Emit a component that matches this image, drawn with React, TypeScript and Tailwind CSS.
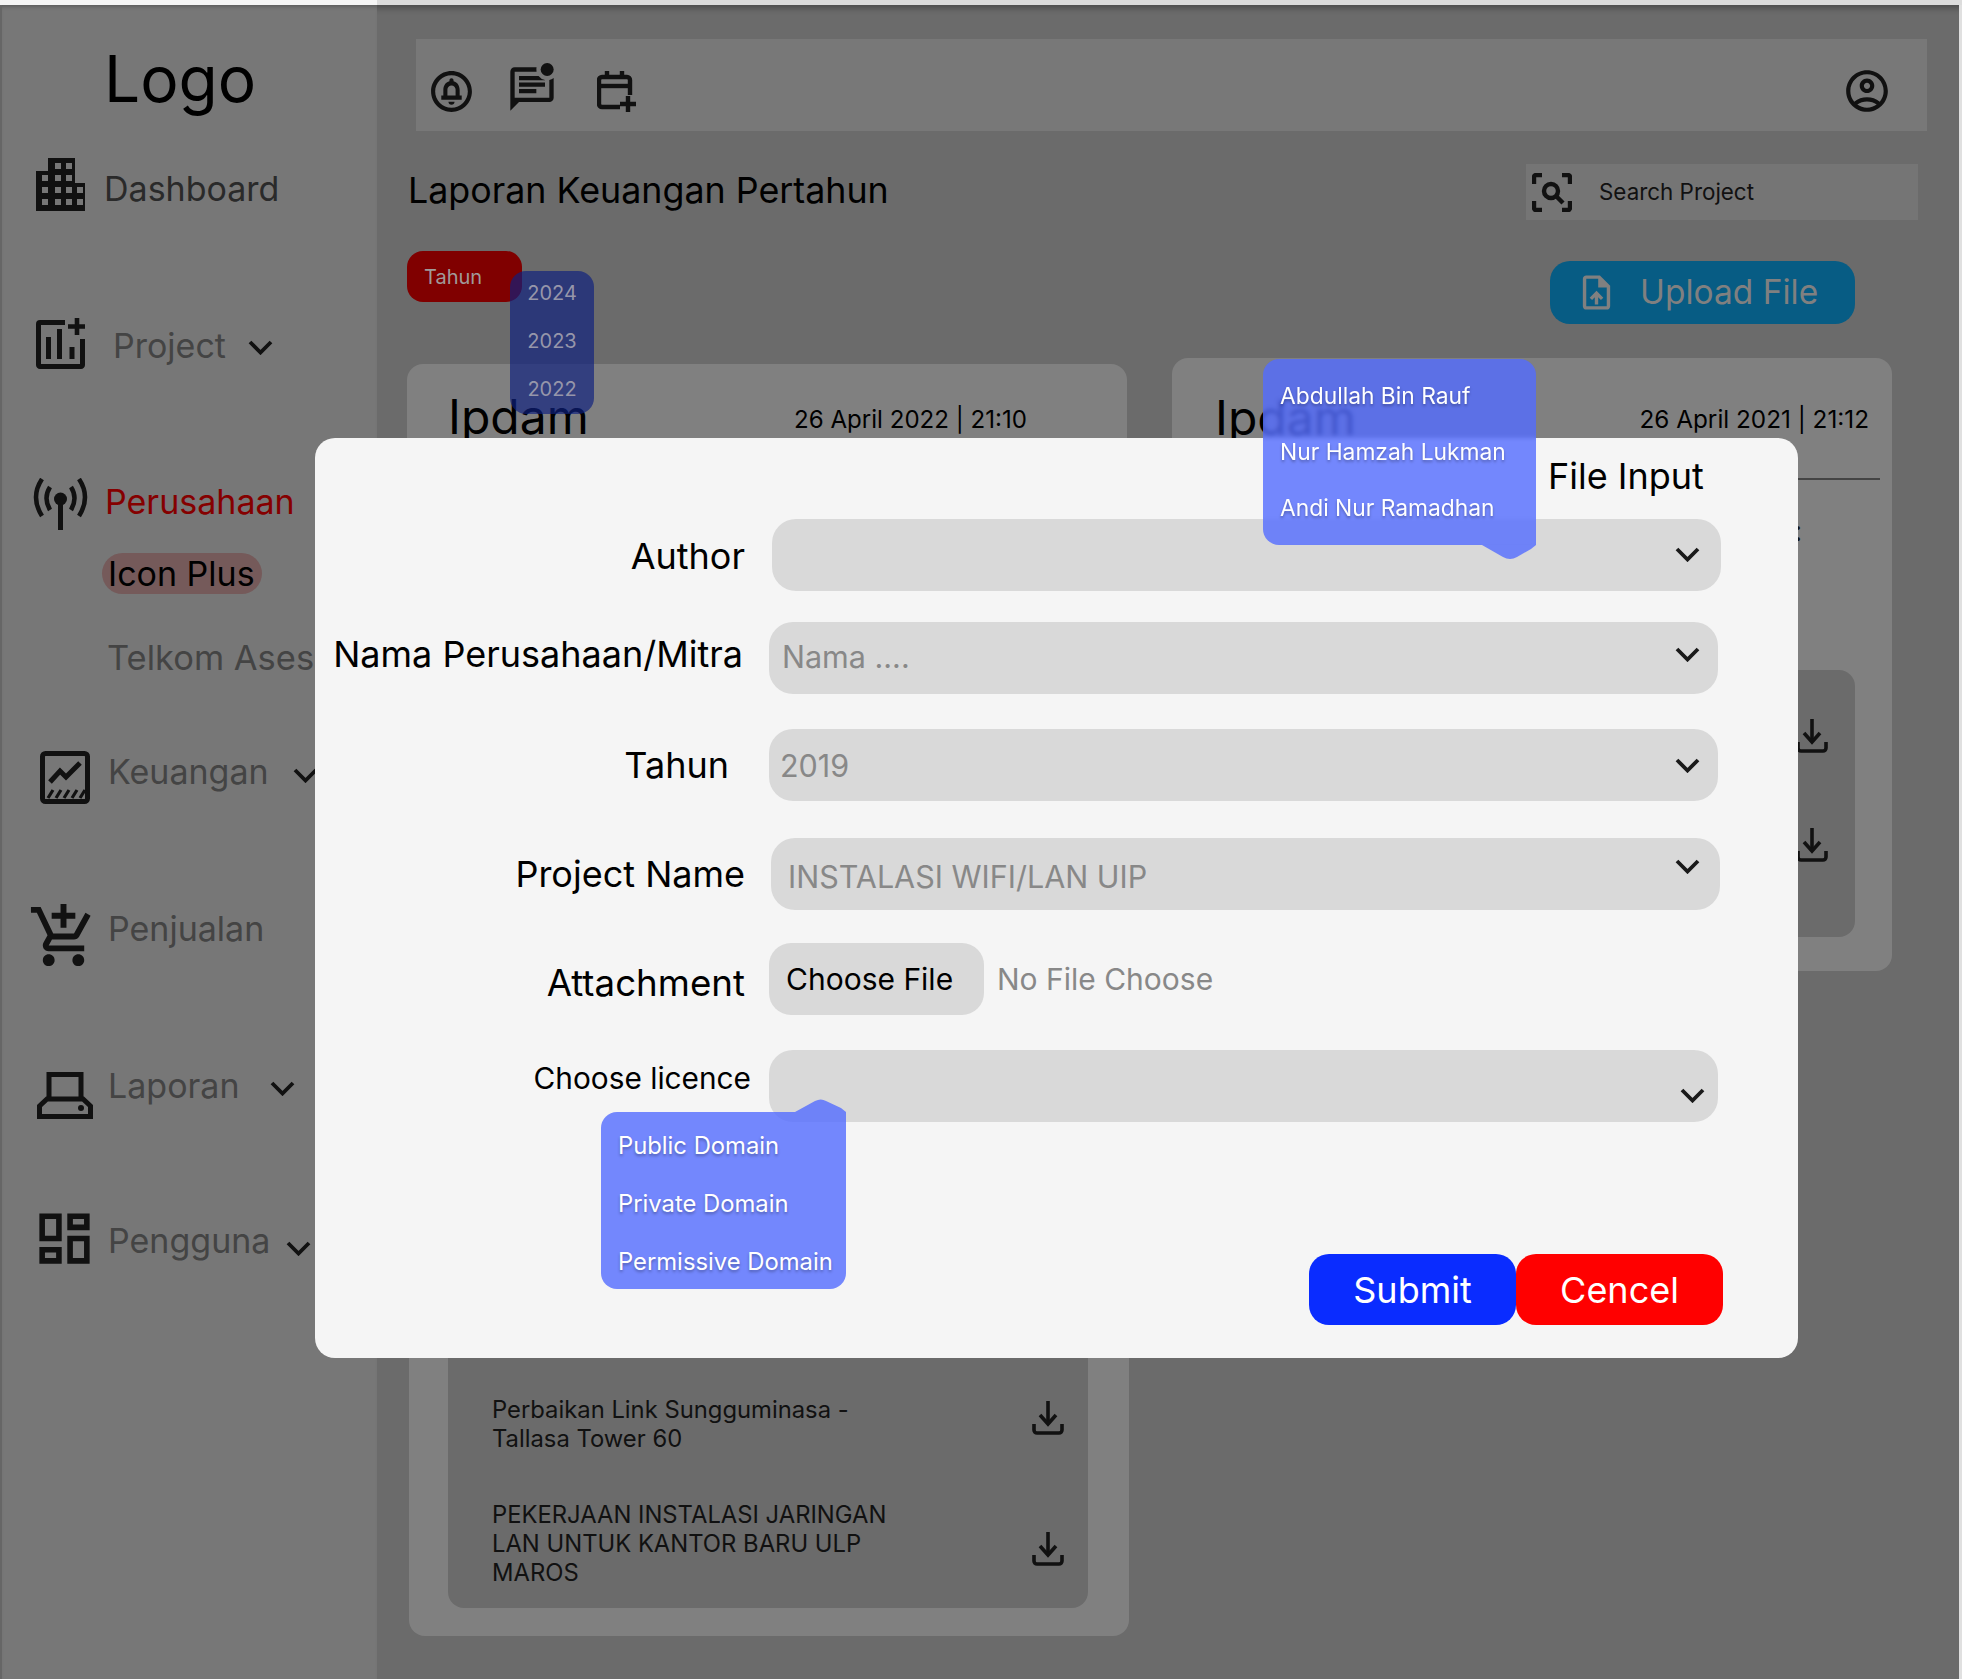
import React from "react";
import {
  MdOutlineAddShoppingCart,
  MdOutlineDashboard,
  MdOutlineCircleNotifications,
  MdOutlineMarkUnreadChatAlt,
  MdOutlineAccountCircle,
  MdOutlineUploadFile,
} from "react-icons/md";

const Chevron = ({ className = "" }: { className?: string }) => (
  <svg viewBox="0 0 25 15" className={`h-[15px] w-[25px] shrink-0 ${className}`} fill="none">
    <path d="M2 2 L12.5 12.5 L23 2" stroke="currentColor" strokeWidth="3.8" />
  </svg>
);

const Download = ({ className = "" }: { className?: string }) => (
  <svg viewBox="0 0 32 34" className={`h-[34px] w-[32px] shrink-0 text-[#111] ${className}`} fill="none" stroke="currentColor" strokeWidth="3.6">
    <path d="M16 0V21" />
    <path d="M8 14 L16 23 L24 14" />
    <path d="M2 23V29a3 3 0 0 0 3 3H27a3 3 0 0 0 3-3V23" />
  </svg>
);

const Building = () => (
  <svg viewBox="0 0 49 53" className="h-[53px] w-[49px] text-[#111]" fill="currentColor">
    <path
      fillRule="evenodd"
      d="M12 0H39V25H49V53H0V13H12Z M19 5v6h6v-6z M30 5v6h6v-6z M6 17v6h6v-6z M19 17v6h6v-6z M30 17v6h6v-6z M6 29v6h6v-6z M19 29v6h6v-6z M30 29v6h6v-6z M41 29v6h6v-6z M6 41v6h6v-6z M19 41v6h6v-6z M30 41v6h6v-6z M41 41v6h6v-6z"
    />
  </svg>
);

const ChartAdd = () => (
  <svg viewBox="0 0 49 51" className="h-[51px] w-[49px] text-[#111]" fill="none" stroke="currentColor" strokeWidth="5">
    <path d="M29 4.5H4a1.5 1.5 0 0 0-1.5 1.500V47a1.500 1.500 0 0 0 1.500 1.500H45a1.500 1.500 0 0 0 1.500-1.500V21" />
    <path d="M12.500 19V41 M23.500 11V41 M36 29V41" />
    <path d="M41 0V17 M32 8.500H49" strokeWidth="4.600" />
  </svg>
);

const TowerIcon = () => (
  <svg viewBox="0 0 55 52" className="h-[52px] w-[55px] text-[#111]" fill="none" stroke="currentColor" strokeWidth="4.5">
    <path d="M9 1 Q-3 19 9 38 M46 1 Q58 19 46 38" />
    <path d="M17 9 Q10 20 17 32 M38 9 Q45 20 38 32" />
    <circle cx="27.5" cy="21" r="6.5" fill="currentColor" stroke="none" />
    <path d="M27.5 22V52" strokeWidth="5" />
  </svg>
);

const FinanceIcon = () => (
  <svg viewBox="0 0 50 53" className="h-[53px] w-[50px] text-[#111]" fill="none" stroke="currentColor">
    <rect x="2.5" y="2.5" width="45" height="48" rx="3" strokeWidth="5" />
    <path d="M10 31 L20 20 L26 26 L40 12" strokeWidth="5" />
    <path d="M8 47 L13 39 M16 47 L21 39 M24 47 L29 39 M32 47 L37 39 M40 47 L45 39" strokeWidth="3.2" />
  </svg>
);

const ReportIcon = () => (
  <svg viewBox="0 0 56 47" className="h-[47px] w-[56px] text-[#111]" fill="none" stroke="currentColor" strokeWidth="5">
    <path d="M12 28V2.5H44V28" />
    <path d="M10 27H46L53.5 34V44.5H2.5V34Z" />
    <circle cx="44" cy="36" r="3" fill="currentColor" stroke="none" />
  </svg>
);

const CalendarAdd = () => (
  <svg viewBox="0 0 39 41" className="h-[41px] w-[39px] text-[#111]" fill="none" stroke="currentColor" strokeWidth="4.4">
    <path d="M23 36H5a3 3 0 0 1-3-3V9a3 3 0 0 1 3-3H30a3 3 0 0 1 3 3V24" />
    <path d="M2 15H33" />
    <path d="M10 0V8 M25 0V8" />
    <path d="M31 25V41 M23 33H39" />
  </svg>
);

const ScanSearch = () => (
  <svg viewBox="0 0 40 39" className="h-[39px] w-[40px] shrink-0 text-[#111]" fill="none" stroke="currentColor" strokeWidth="4.4">
    <path d="M2 11V4a2 2 0 0 1 2-2H10 M30 2H36a2 2 0 0 1 2 2V11 M38 28V35a2 2 0 0 1-2 2H30 M10 37H4a2 2 0 0 1-2-2V28" />
    <circle cx="19" cy="18" r="7" />
    <path d="M24 23L31 30" />
  </svg>
);

const NavLabel = ({ children, className = "", color = "text-[#444]" }: { children: React.ReactNode; className?: string; color?: string }) => (
  <span className={`text-[34px] leading-[44px] ${color} ${className}`}>{children}</span>
);

const Select = ({ className, children, chevron = "" }: { className: string; children?: React.ReactNode; chevron?: string }) => (
  <div className={`flex h-[72px] shrink-0 items-center justify-between rounded-[24px] bg-[#d9d9d9] ${className}`}>
    <span className="text-[30.5px] text-[#888]">{children}</span>
    <Chevron className={`text-[#1a1a1a] ${chevron}`} />
  </div>
);

const Label = ({ className, children, size = "text-[36px]" }: { className: string; children: React.ReactNode; size?: string }) => (
  <span className={`shrink-0 text-right leading-[44px] text-black ${size} ${className}`}>{children}</span>
);

const menuItem = "leading-[30px] text-white [text-shadow:0_2px_3px_rgba(0,0,0,0.3)]";

export default function App() {
  return (
    <div className="relative flex h-[1679px] w-[1962px] flex-col overflow-hidden bg-[#6b6b6b] font-['Inter','Liberation_Sans',sans-serif] text-black">
      <div className="flex h-[5px] shrink-0">
        <div className="w-[377px] bg-[#f5f5f5]" />
        <div className="flex-1 bg-[#dcdcdc]" />
      </div>

      <div className="flex flex-1 shadow-[inset_0_6px_6px_-3px_rgba(0,0,0,0.3)]">
        {/* Sidebar */}
        <aside className="flex w-[377px] shrink-0 flex-col border-l-2 border-[#666] bg-[#777777] shadow-[inset_0_4px_4px_-3px_rgba(0,0,0,0.3)]">
          <div className="ml-[102px] mt-[38px] h-[72px] text-[64px] leading-[72px]">Logo</div>

          <div className="ml-[34px] mt-[43px] flex h-[53px] items-center">
            <Building />
            <NavLabel className="ml-[19px] mt-[8px]" color="text-[#2a2a2a]">Dashboard</NavLabel>
          </div>

          <div className="ml-[34px] mt-[107px] flex h-[51px] items-center">
            <ChartAdd />
            <NavLabel className="ml-[28px] mt-[5px]">Project</NavLabel>
            <Chevron className="ml-[22px] mt-[7px] text-[#111]" />
          </div>

          <div className="ml-[31px] mt-[109px] flex h-[52px] items-center">
            <TowerIcon />
            <NavLabel className="ml-[17px] mb-[4px]" color="text-[#850000]">Perusahaan</NavLabel>
          </div>

          <div className="ml-[100px] mt-[23px] flex h-[41px] w-[160px] items-center whitespace-nowrap rounded-[21px] bg-[#755a5a] pl-[6px] text-[34px] leading-[41px] text-black">
            Icon Plus
          </div>

          <div className="ml-[105px] mt-[42px] h-[44px] whitespace-nowrap text-[34.5px] leading-[44px] text-[#444]">Telkom Ases</div>

          <div className="ml-[38px] mt-[71px] flex h-[53px] items-center">
            <FinanceIcon />
            <NavLabel className="ml-[18px] mb-[11px]">Keuangan</NavLabel>
            <Chevron className="ml-[24px] mb-[4px] text-[#111]" />
          </div>

          <div className="ml-[33px] mt-[100px] flex h-[62px] items-center">
            <span className="flex h-[62px] w-[57px] shrink-0 items-center justify-center pt-[2px] text-[#111]">
              <MdOutlineAddShoppingCart size={71} className="shrink-0" />
            </span>
            <NavLabel className="ml-[16px] mb-[12px]">Penjualan</NavLabel>
          </div>

          <div className="ml-[35px] mt-[106px] flex h-[47px] items-center">
            <ReportIcon />
            <NavLabel className="ml-[15px] mb-[19px]">Laporan</NavLabel>
            <Chevron className="ml-[30px] mb-[15px] text-[#111]" />
          </div>

          <div className="ml-[37px] mt-[93px] flex h-[52px] items-center">
            <span className="flex h-[52px] w-[50px] shrink-0 items-center justify-center text-[#111]">
              <MdOutlineDashboard size={67} className="shrink-0" />
            </span>
            <NavLabel className="ml-[19px] mt-[6px]">Pengguna</NavLabel>
            <Chevron className="ml-[16px] mt-[20px] text-[#111]" />
          </div>
        </aside>

        {/* Main */}
        <main className="flex flex-1 flex-col pl-[30px]">
          <header className="ml-[9px] mr-[32px] mt-[34px] flex h-[92px] items-center bg-[#787878] pt-[12px] text-[#111]">
            <span className="ml-[15px] flex w-[41px] items-center justify-center">
              <MdOutlineCircleNotifications size={49} className="shrink-0" />
            </span>
            <span className="ml-[38px] mb-[4px] flex w-[43px] items-center justify-center">
              <MdOutlineMarkUnreadChatAlt size={52} className="shrink-0" />
            </span>
            <span className="ml-[44px]">
              <CalendarAdd />
            </span>
            <span className="ml-auto mr-[39px] flex w-[42px] items-center justify-center">
              <MdOutlineAccountCircle size={50} className="shrink-0" />
            </span>
          </header>

          <div className="mt-[33px] flex h-[56px] items-center justify-between pr-[41px]">
            <h1 className="mb-[4px] ml-[1px] text-[35.8px] font-normal leading-[44px]">Laporan Keuangan Pertahun</h1>
            <div className="flex h-[56px] w-[392px] items-center bg-[#757575] pl-[6px]">
              <ScanSearch />
              <span className="ml-[27px] text-[22.4px] text-[#111]">Search Project</span>
            </div>
          </div>

          <div className="mt-[31px] flex h-[73px] items-start justify-between pr-[104px]">
            <div className="flex h-[51px] w-[115px] items-center rounded-[16px] bg-[#800000] pl-[17px] text-[20px] text-[#a09a9a]">Tahun</div>
            <div className="mt-[10px] flex h-[63px] w-[305px] items-center rounded-[20px] bg-[#075c84] pl-[26px] text-[33.5px] leading-[60px] text-[#808080]">
              <MdOutlineUploadFile size={41} className="shrink-0" />
              <span className="ml-[23px] mb-[2px]">Upload File</span>
            </div>
          </div>

          <div className="mt-[34px] flex items-start gap-[45px]">
            <div className="mt-[6px] flex w-[722px] flex-col">
              <section className="mr-[2px] flex h-[300px] flex-col rounded-[16px] bg-[#808080]">
                <div className="flex h-[110px] items-center justify-between pl-[41px] pr-[100px]">
                  <span className="mb-[4px] text-[48px] leading-[56px]">Ipdam</span>
                  <span className="mt-[2px] text-[24.1px]">26 April 2022 | 21:10</span>
                </div>
              </section>
              <section className="ml-[2px] -mt-[20px] flex h-[992px] flex-col justify-end rounded-[16px] bg-[#808080] pb-[28px]">
                <div className="ml-[39px] mr-[41px] flex h-[800px] flex-col justify-end rounded-[16px] bg-[#6b6b6b] pb-[21px] pl-[44px] pr-[24px]">
                  <div className="flex items-center justify-between">
                    <p className="text-[23.8px] leading-[29px] text-[#111]">
                      Perbaikan Link Sungguminasa -<br />Tallasa Tower 60
                    </p>
                    <Download className="mb-[12px]" />
                  </div>
                  <div className="mt-[47px] flex items-center justify-between">
                    <p className="text-[23.8px] leading-[29px] text-[#111]">
                      PEKERJAAN INSTALASI JARINGAN<br />LAN UNTUK KANTOR BARU ULP<br />MAROS
                    </p>
                    <Download className="mt-[10px]" />
                  </div>
                </div>
              </section>
            </div>

            <section className="-ml-[2px] flex h-[613px] w-[720px] flex-col rounded-[16px] bg-[#808080]">
              <div className="flex h-[120px] items-center justify-between pl-[43px] pr-[23px]">
                <span className="text-[48px] leading-[56px]">Ipdam</span>
                <span className="mt-[2px] text-[24.3px]">26 April 2021 | 21:12</span>
              </div>
              <div className="mr-[12px] h-[2px] bg-[#444]" />
              <div className="ml-auto mr-[90px] mt-[29px] h-[44px] text-[28px] leading-[44px] text-[#111]">Files :</div>
              <div className="ml-auto mr-[37px] mt-[117px] flex h-[267px] w-[640px] flex-col items-end rounded-[16px] bg-[#6b6b6b] pr-[27px] pt-[49px]">
                <Download />
                <Download className="mt-[75px]" />
              </div>
            </section>
          </div>
        </main>

        <div className="w-[3px] shrink-0 bg-[#e0e0e0]" />
      </div>

      {/* Year dropdown */}
      <div className="absolute left-[510px] top-[271px] flex h-[143px] w-[84px] flex-col items-center rounded-[16px] bg-[rgba(14,31,127,0.67)] text-[20px] leading-[48px] text-[#9696aa]">
        <span className="-mt-[2px]">2024</span>
        <span>2023</span>
        <span>2022</span>
      </div>

      {/* Modal */}
      <div className="absolute left-[315px] top-[438px] flex h-[920px] w-[1483px] flex-col rounded-[20px] bg-[#f5f5f5]">
        <div className="ml-[1233px] mt-[16px] h-[44px] text-[36px] leading-[44px]">File Input</div>

        <div className="mt-[21px] flex items-center">
          <Label className="mt-[1px] w-[430px]">Author</Label>
          <Select className="ml-[27px] w-[949px] pr-[21px]" chevron="mt-[-2px]" />
        </div>

        <div className="mt-[31px] flex items-center">
          <Label className="mb-[8px] w-[428px] whitespace-nowrap">Nama Perusahaan/Mitra</Label>
          <Select className="ml-[26px] w-[949px] pl-[13px] pr-[18px]" chevron="mb-[8px]">
            <span className="relative -top-[1px]">Nama ....</span>
          </Select>
        </div>

        <div className="mt-[35px] flex items-center">
          <Label className="w-[414px]">Tahun</Label>
          <Select className="ml-[40px] w-[949px] pl-[11px] pr-[18px]">
            <span className="relative top-[1px]">2019</span>
          </Select>
        </div>

        <div className="mt-[37px] flex items-center">
          <Label className="w-[430px]">Project Name</Label>
          <Select className="ml-[26px] w-[949px] pl-[17px] pr-[20px] pt-[6px]" chevron="mb-[21px]">INSTALASI WIFI/LAN UIP</Select>
        </div>

        <div className="mt-[33px] flex items-center">
          <Label className="mt-[8px] w-[430px]" size="text-[36.7px]">Attachment</Label>
          <div className="ml-[24px] flex h-[72px] w-[215px] shrink-0 items-center rounded-[22px] bg-[#d9d9d9] pl-[17px] text-[30px] text-black">
            Choose File
          </div>
          <span className="ml-[13px] mt-[1px] text-[30px] text-[#888]">No File Choose</span>
        </div>

        <div className="mt-[35px] flex items-center">
          <Label className="mb-[16px] w-[436px]" size="text-[29.8px]">Choose licence</Label>
          <Select className="ml-[18px] w-[949px] pr-[13px]" chevron="mt-[18px]" />
        </div>

        <div className="ml-[994px] mt-[132px] flex h-[71px]">
          <div className="flex w-[207px] items-center justify-center rounded-[20px] bg-[#0a2cff] text-[36px] text-white">Submit</div>
          <div className="flex w-[207px] items-center justify-center rounded-[20px] bg-[#ff0000] text-[36px] text-white">Cencel</div>
        </div>
      </div>

      {/* Author dropdown */}
      <div className="absolute left-[1263px] top-[359px] flex h-[186px] w-[273px] flex-col justify-between rounded-[16px] rounded-br-none bg-[rgba(82,107,255,0.8)] pb-[22px] pl-[17px] pt-[22px] text-[22.8px] backdrop-blur-[2px]">
        <span className={menuItem}>Abdullah Bin Rauf</span>
        <span className={menuItem}>Nur Hamzah Lukman</span>
        <span className={menuItem}>Andi Nur Ramadhan</span>
      </div>
      <svg viewBox="0 0 54 15" className="absolute left-[1482px] top-[545px] h-[15px] w-[54px]" fill="rgba(82,107,255,0.8)">
        <path d="M0 0 L21 12 Q28 16 35 12 L49 4 Q54 0 54 0 Z" />
      </svg>

      {/* Licence dropdown */}
      <div className="absolute left-[601px] top-[1112px] flex h-[177px] w-[245px] flex-col justify-between rounded-[16px] rounded-tr-none bg-[rgba(82,107,255,0.8)] pb-[12px] pl-[17px] pt-[19px] text-[23.8px]">
        <span className={menuItem}>Public Domain</span>
        <span className={menuItem}>Private Domain</span>
        <span className={menuItem}>Permissive Domain</span>
      </div>
      <svg viewBox="0 0 51 13" className="absolute left-[795px] top-[1099px] h-[13px] w-[51px]" fill="rgba(82,107,255,0.8)">
        <path d="M0 13 L20 2 Q26 -1 31 2 L46 9 Q51 13 51 13 Z" />
      </svg>
    </div>
  );
}
